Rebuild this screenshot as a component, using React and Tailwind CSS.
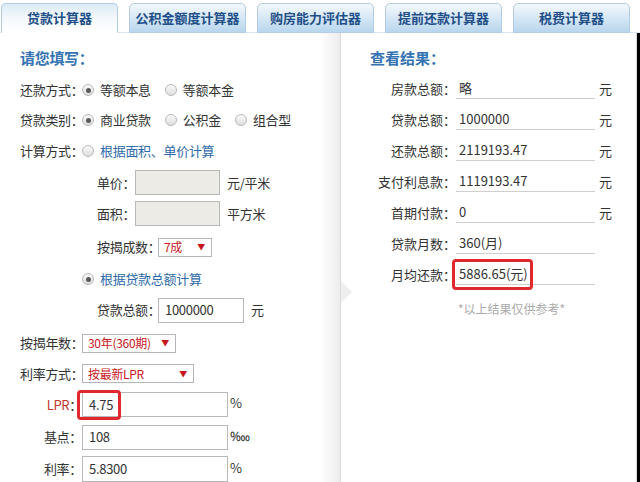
const FONT = { fontFamily: '"Noto Sans CJK SC", "Liberation Sans", sans-serif' };

const tabs = ["贷款计算器", "公积金额度计算器", "购房能力评估器", "提前还款计算器", "税费计算器"];

const Radio = ({ checked }) => (
  <span className="w-[12px] h-[12px] shrink-0 rounded-full border border-[#b9b9b9] bg-linear-to-b from-[#fafafa] to-[#dedede] flex items-center justify-center">
    {checked && <span className="w-[5px] h-[5px] rounded-full bg-[#5a5a5a]" />}
  </span>
);

const Select = ({ value, w }) => (
  <div
    className="h-[19px] shrink-0 border border-[#b3b7bb] bg-white flex items-center justify-between pl-[5px] pr-[6px] text-[12px] text-[#c8161d]"
    style={{ width: w }}
  >
    <span>{value}</span>
    <span className="text-[8px]">▼</span>
  </div>
);

const Input = ({ value, w, gray, h = 25 }) => (
  <div
    className={`shrink-0 border border-[#b8b8b8] flex items-center pl-[6px] text-[13px] text-[#333] ${gray ? "bg-[#ecebe6]" : "bg-white"}`}
    style={{ width: w, height: h }}
  >
    {value}
  </div>
);

const ResultRow = ({ label, value, unit, boxed }) => (
  <div className="h-[31px] flex items-center">
    <span className="w-[86px] shrink-0 text-right text-[13px] text-[#333]">{label}</span>
    <div className="relative w-[139px] h-[20px] border-b border-[#cfcfcf] flex items-center pl-[3px] text-[13px] text-[#333]">
      {value}
      {boxed && (
        <span className="absolute left-[-4px] top-[-6px] w-[81px] h-[31px] border-[3px] border-[#e0282e] rounded-[4px]" />
      )}
    </div>
    {unit && <span className="ml-[4px] text-[13px] text-[#333]">{unit}</span>}
  </div>
);

export default function App() {
  return (
    <div className="w-[640px] h-[482px] overflow-hidden bg-white flex flex-col whitespace-nowrap" style={FONT}>
      {/* tab bar */}
      <div className="h-[33px] shrink-0 flex items-end gap-[11px] pl-[1px] border-b border-[#dde5ec]">
        {tabs.map((t, i) => (
          <div
            key={t}
            className={`w-[117px] h-[30px] -mb-px rounded-t-[5px] border border-[#b4cbe0] flex items-center justify-center text-[13px] font-bold text-[#1f4f88] ${
              i === 0
                ? "border-b-white bg-linear-to-b from-[#dcebf6] via-[#f3f8fc] to-white"
                : "bg-linear-to-b from-[#f3f8fc] to-[#b8d6ee]"
            }`}
          >
            {t}
          </div>
        ))}
      </div>

      <div className="flex-1 flex">
        {/* left form */}
        <div className="w-[320px] pl-[20px] pt-[15px] text-[13px] text-[#333] tracking-[-0.3px]">
          <div className="h-[20px] flex items-center text-[15px] font-bold text-[#3573b3]">请您填写：</div>

          <div className="mt-[7px] h-[30px] flex items-center">
            <span className="w-[62px] shrink-0">还款方式：</span>
            <Radio checked />
            <span className="ml-[6px]">等额本息</span>
            <span className="ml-[14px]"><Radio /></span>
            <span className="ml-[6px]">等额本金</span>
          </div>

          <div className="h-[30px] flex items-center">
            <span className="w-[62px] shrink-0">贷款类别：</span>
            <Radio checked />
            <span className="ml-[6px]">商业贷款</span>
            <span className="ml-[14px]"><Radio /></span>
            <span className="ml-[6px]">公积金</span>
            <span className="ml-[14px]"><Radio /></span>
            <span className="ml-[6px]">组合型</span>
          </div>

          <div className="h-[32px] flex items-center">
            <span className="w-[62px] shrink-0">计算方式：</span>
            <Radio />
            <span className="ml-[6px] text-[#2d6aa8]">根据面积、单价计算</span>
          </div>

          <div className="h-[31px] flex items-center pl-[77px]">
            <span className="w-[38px] shrink-0">单价：</span>
            <Input w={85} gray />
            <span className="ml-[7px]">元/平米</span>
          </div>

          <div className="h-[31px] flex items-center pl-[77px]">
            <span className="w-[38px] shrink-0">面积：</span>
            <Input w={85} gray />
            <span className="ml-[7px]">平方米</span>
          </div>

          <div className="h-[36px] flex items-center pl-[77px]">
            <span className="w-[61px] shrink-0">按揭成数：</span>
            <Select value="7成" w={54} />
          </div>

          <div className="h-[28px] flex items-center pl-[62px]">
            <Radio checked />
            <span className="ml-[6px] text-[#2d6aa8]">根据贷款总额计算</span>
          </div>

          <div className="h-[34px] flex items-center pl-[77px]">
            <span className="w-[61px] shrink-0">贷款总额：</span>
            <Input w={86} value="1000000" />
            <span className="ml-[7px]">元</span>
          </div>

          <div className="h-[32px] flex items-center">
            <span className="w-[62px] shrink-0">按揭年数：</span>
            <Select value="30年(360期)" w={94} />
          </div>

          <div className="h-[29px] flex items-center">
            <span className="w-[62px] shrink-0">利率方式：</span>
            <Select value="按最新LPR" w={112} />
          </div>

          <div className="h-[33px] flex items-center">
            <span className="w-[62px] shrink-0 text-right"><span className="text-[#c0392b]">LPR</span>：</span>
            <div className="relative">
              <Input w={146} value="4.75" />
              <span className="absolute left-[-5px] top-[-2px] w-[44px] h-[30px] border-[3px] border-[#e0282e] rounded-[4px]" />
            </div>
            <span className="ml-[2px] self-start mt-[5px]">%</span>
          </div>

          <div className="h-[32px] flex items-center">
            <span className="w-[62px] shrink-0 text-right">基点：</span>
            <Input w={146} value="108" />
            <span className="ml-[2px] self-start mt-[5px]">‱</span>
          </div>

          <div className="h-[32px] flex items-center">
            <span className="w-[62px] shrink-0 text-right">利率：</span>
            <Input w={146} value="5.8300" h={26} />
            <span className="ml-[2px] self-start mt-[5px]">%</span>
          </div>
        </div>

        {/* divider strip */}
        <div className="w-[20px] bg-linear-to-r from-white to-[#ececec]" />

        {/* right results */}
        <div className="relative flex-1 border-l border-[#dcdcdc] pl-[29px] pt-[15px]">
          <span className="absolute left-0 top-[248px] w-0 h-0 border-y-[11px] border-y-transparent border-l-[11px] border-l-[#eeeeee]" />
          <div className="h-[20px] flex items-center text-[15px] font-bold text-[#3573b3]">查看结果：</div>
          <div className="mt-[5px]">
            <ResultRow label="房款总额：" value="略" unit="元" />
            <ResultRow label="贷款总额：" value="1000000" unit="元" />
            <ResultRow label="还款总额：" value="2119193.47" unit="元" />
            <ResultRow label="支付利息款：" value="1119193.47" unit="元" />
            <ResultRow label="首期付款：" value="0" unit="元" />
            <ResultRow label="贷款月数：" value="360(月)" />
            <ResultRow label="月均还款：" value="5886.65(元)" boxed />
          </div>
          <div className="mt-[10px] pl-[88px] text-[12px] text-[#aaaaaa]">*以上结果仅供参考*</div>
        </div>

        <div className="w-[1px] bg-[#d8d8d8]" />
        <div className="w-[3px] bg-black" />
      </div>
    </div>
  );
}
